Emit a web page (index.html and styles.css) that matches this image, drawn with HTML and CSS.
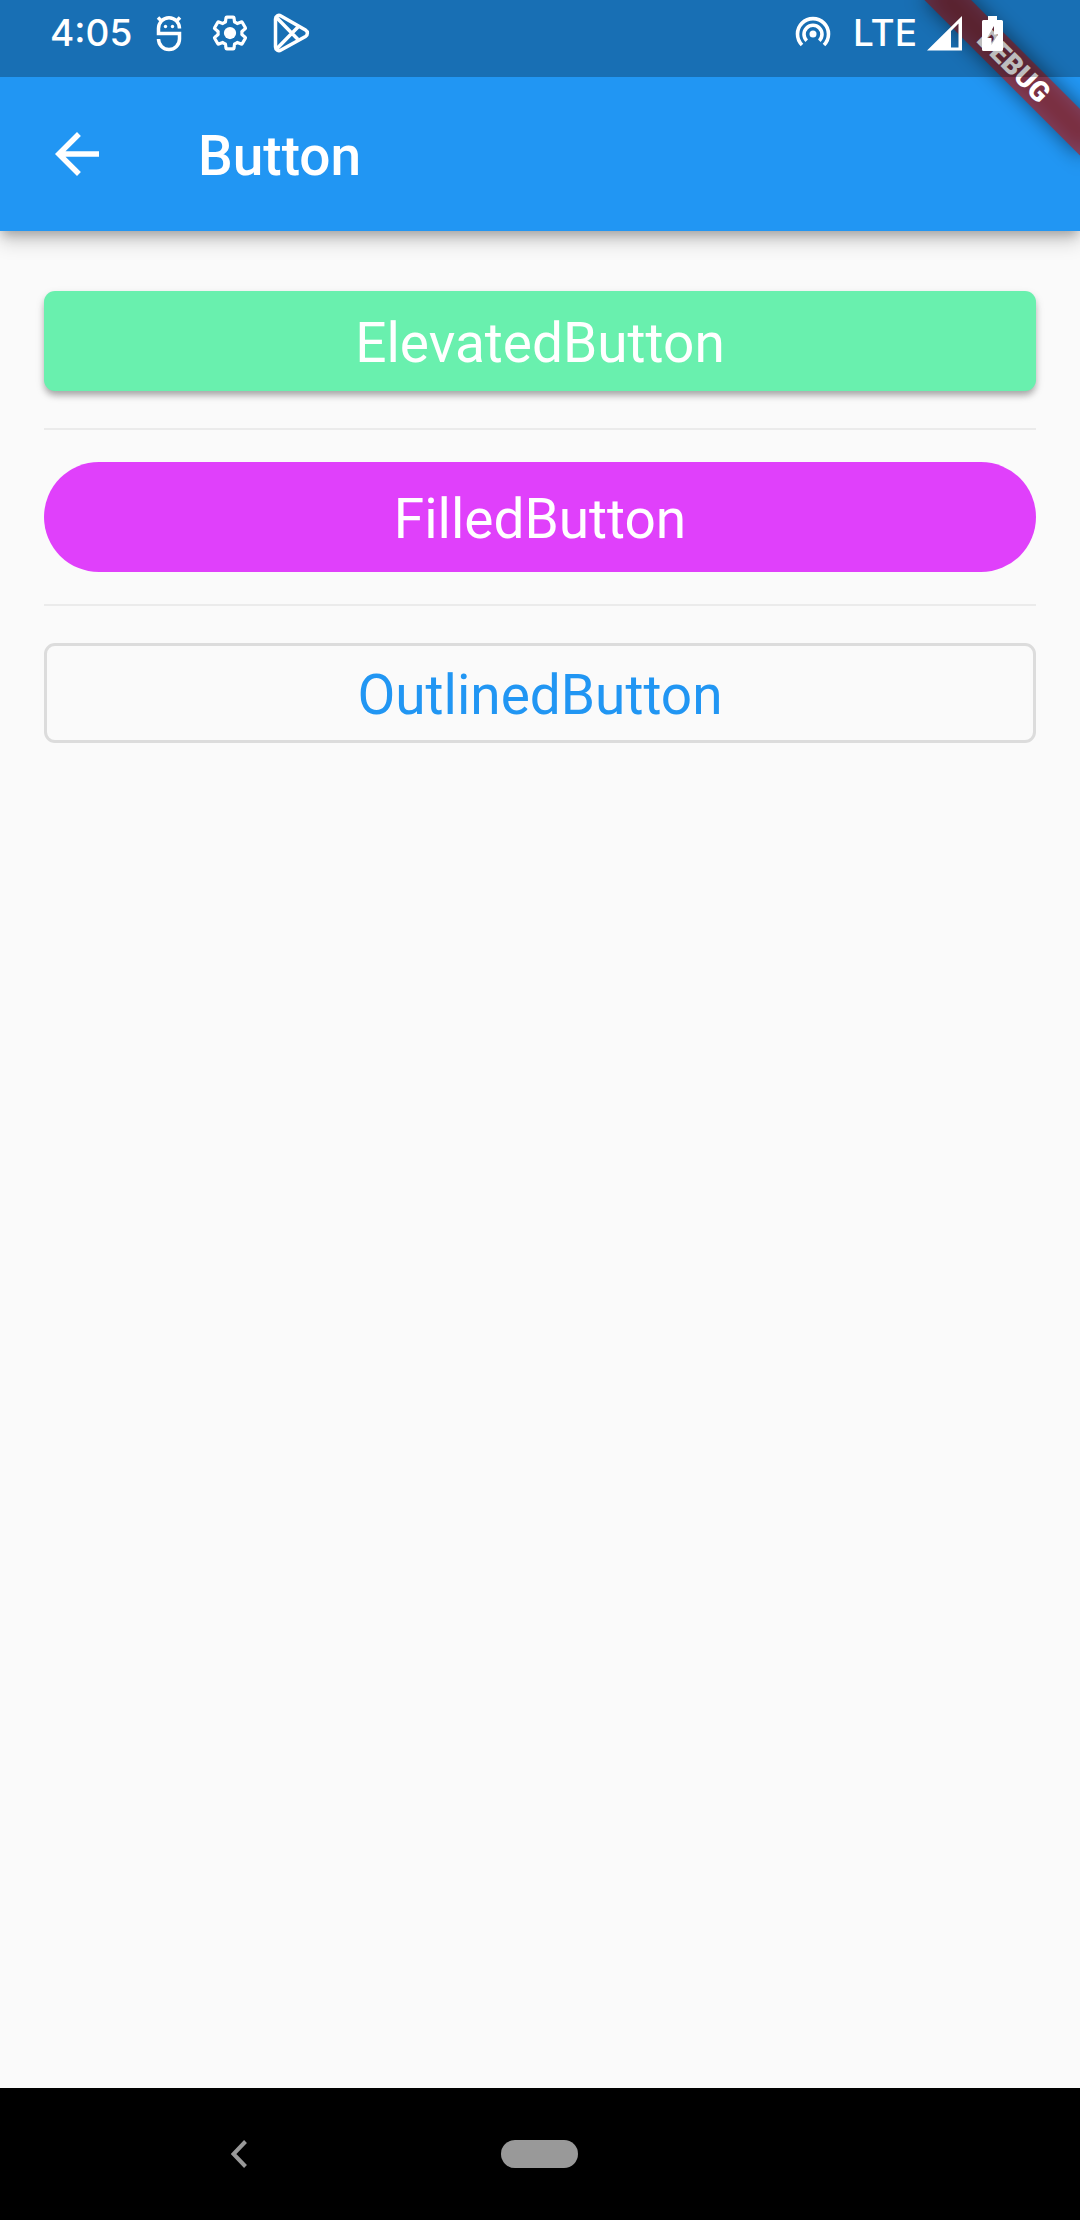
FILE: index.html
```
<!DOCTYPE html>
<html lang="en">
<head>
<meta charset="utf-8">
<meta name="viewport" content="width=device-width, initial-scale=1">
<title>Button</title>
<link rel="stylesheet" href="styles.css">
</head>
<body>
<div class="screen">
  <div class="status-bar">
    <div class="status-group">
      <span class="clock">4:05</span>
      <div class="notifications">
        <svg class="status-icon" viewBox="0 0 42 42" fill="none" stroke="#fff" stroke-width="3.500" aria-hidden="true">
          <path d="M31.500 16.500A10.500 10.800 0 0 0 10.500 16.500V21.500H31.500V27A10.500 10.500 0 0 1 10.500 27"/>
          <path d="M10 5.500l4 4M32 5.500l-4 4"/>
          <circle cx="17.500" cy="14.500" r="1.700" fill="#fff" stroke="none"/>
          <circle cx="24.500" cy="14.500" r="1.700" fill="#fff" stroke="none"/>
        </svg>
        <svg class="status-icon" viewBox="0 0 24 24" aria-hidden="true">
          <path transform="translate(1.080 1.080) scale(.910)" fill="none" stroke="#fff" stroke-width="2" stroke-linejoin="round" d="M19.430 12.980c.04-.32.07-.64.07-.98 0-.34-.03-.66-.07-.98l2.110-1.650c.19-.15.24-.42.12-.64l-2-3.460c-.09-.16-.26-.25-.44-.25-.06 0-.12.01-.17.03l-2.490 1c-.52-.4-1.080-.73-1.690-.98l-.38-2.650C14.460 2.180 14.250 2 14 2h-4c-.25 0-.46.18-.49.42l-.38 2.650c-.61.25-1.170.59-1.690.98l-2.490-1c-.06-.02-.12-.03-.18-.03-.17 0-.34.09-.43.25l-2 3.460c-.13.22-.07.49.12.64l2.110 1.650c-.04.32-.07.65-.07.98 0 .33.03.66.07.98l-2.110 1.650c-.19.15-.24.42-.12.64l2 3.460c.09.16.26.25.44.25.06 0 .12-.01.17-.03l2.490-1c.52.4 1.080.73 1.690.98l.38 2.650c.03.24.24.42.49.42h4c.25 0 .46-.18.49-.42l.38-2.650c.61-.25 1.170-.59 1.690-.98l2.490 1c.06.02.12.03.18.03.17 0 .34-.09.43-.25l2-3.460c.12-.22.07-.49-.12-.64z"/>
          <circle cx="12" cy="12" r="3.500" fill="#fff"/>
        </svg>
        <svg class="status-icon" viewBox="0 0 42 42" fill="none" stroke="#fff" stroke-width="3.500" stroke-linejoin="round" aria-hidden="true">
          <path d="M5.500 7v28c0 3 3 4.500 5.500 3L35.500 24.500c2.500-1.500 2.500-5 0-6.500L11 4C8.500 2.500 5.500 4 5.500 7z"/>
          <path d="M6.500 5.500L28 27.500M6.500 37L28 15"/>
        </svg>
      </div>
    </div>
    <div class="status-group">
      <svg class="hotspot-icon" viewBox="0 0 36 36" fill="none" stroke="#fff" stroke-width="3.600" aria-hidden="true">
        <path d="M7 30A15.500 15.500 0 1 1 29 30"/>
        <path d="M11.700 25.700A9 9 0 1 1 24.300 25.700"/>
        <circle cx="18" cy="19" r="3.500" fill="#fff" stroke="none"/>
      </svg>
      <span class="network">LTE</span>
      <svg class="signal-icon" viewBox="0 0 35 35" aria-hidden="true">
        <path fill="#fff" fill-rule="evenodd" d="M0 34.500L35 0v34.500zM24 15v16.500h7.500V7.500z"/>
      </svg>
      <svg class="battery-icon" viewBox="0 0 21 35" aria-hidden="true">
        <path fill="#fff" fill-rule="evenodd" d="M6 0h9v4h4.500Q21 4 21 5.500v28q0 1.500-1.500 1.500h-18Q0 35 0 33.500v-28Q0 4 1.500 4H6zM12 10L5 22h4.500v7L16 18.500h-4z"/>
      </svg>
    </div>
  </div>

  <header class="app-bar">
    <button class="back" type="button" aria-label="Back">
      <svg class="back-icon" viewBox="0 0 24 24" aria-hidden="true">
        <path fill="#fff" d="M20 11H7.830l5.590-5.590L12 4l-8 8 8 8 1.410-1.410L7.830 13H20v-2z"/>
      </svg>
    </button>
    <h1 class="title">Button</h1>
  </header>

  <main class="content">
    <button class="button button-elevated" type="button">ElevatedButton</button>
    <hr class="divider">
    <button class="button button-filled" type="button">FilledButton</button>
    <hr class="divider">
    <button class="button button-outlined" type="button">OutlinedButton</button>
  </main>

  <nav class="nav-bar" aria-label="System">
    <button class="nav-button" type="button" aria-label="Back">
      <svg class="chevron" viewBox="0 0 16 28" aria-hidden="true">
        <path d="M14.500 1.500L2.500 14l12 12.500" fill="none" stroke="#999" stroke-width="4"/>
      </svg>
    </button>
    <button class="nav-button" type="button" aria-label="Home"><span class="pill"></span></button>
  </nav>

  <div class="ribbon-clip"><div class="ribbon">DEBUG</div></div>
</div>
</body>
</html>
```
FILE: styles.css
```
* {
  box-sizing: border-box;
}

body {
  margin: 0;
  background: #fafafa;
  font-family: Roboto, "Liberation Sans", sans-serif;
}

button {
  margin: 0;
  padding: 0;
  border: 0;
  background: none;
  font: inherit;
  cursor: pointer;
}

svg {
  display: block;
}

.screen {
  position: relative;
  display: flex;
  flex-direction: column;
  min-height: 100vh;
}

/* Status bar: the scrim is translucent and sits over the ribbon */
.status-bar {
  position: relative;
  z-index: 3;
  display: flex;
  justify-content: space-between;
  height: 77px;
  padding: 0 77px 11px 50px;
  background: rgba(0, 0, 0, 0.26);
  color: #fff;
}

.status-group {
  display: flex;
  align-items: center;
}

.clock,
.network {
  font-family: Inter, Roboto, sans-serif;
  font-size: 37px;
  font-weight: 500;
  line-height: 44px;
}

.notifications {
  display: flex;
  gap: 19px;
  margin-left: 16px;
}

.status-icon {
  width: 42px;
  height: 42px;
}

.hotspot-icon {
  width: 36px;
  height: 36px;
  margin-right: 22px;
}

.signal-icon {
  width: 35px;
  height: 35px;
  margin: 0 20px 0 10px;
}

.battery-icon {
  width: 21px;
  height: 35px;
}

/* App bar: its colour runs up under the status bar */
.app-bar {
  position: relative;
  z-index: 1;
  display: flex;
  align-items: center;
  gap: 88px;
  height: 231px;
  margin-top: -77px;
  padding: 77px 44px 0;
  background: #2196f3;
  box-shadow: 0 5px 11px -2px rgba(0, 0, 0, 0.26), 0 11px 18px rgba(0, 0, 0, 0.16);
}

.back-icon {
  width: 66px;
  height: 66px;
}

.title {
  margin: 0;
  padding-top: 4px;
  color: #fff;
  font-size: 55px;
  font-weight: 500;
  line-height: 64px;
}

.content {
  flex: 1;
  display: flex;
  flex-direction: column;
  padding: 60px 44px;
}

.button {
  height: 100px;
  padding-top: 4px;
  border-radius: 11px;
  font-size: 55px;
  line-height: 64px;
  text-align: center;
}

.button-elevated {
  background: #69f0ae;
  color: #fff;
  box-shadow: 0 5px 6px -1px rgba(0, 0, 0, 0.24), 0 4px 10px rgba(0, 0, 0, 0.14);
}

.button-filled {
  height: 110px;
  border-radius: 55px;
  background: #e040fb;
  color: #fff;
}

.button-outlined {
  border: 3px solid #dcdcdc;
  color: #2196f3;
}

.divider {
  align-self: stretch;
  height: 2px;
  margin: 37px 0 32px;
  border: 0;
  background: #ebebeb;
}

.button-filled + .divider {
  margin: 32px 0 37px;
}

.nav-bar {
  display: grid;
  grid-template-columns: repeat(3, 1fr);
  height: 132px;
  padding: 0 88px;
  background: #000;
}

.nav-button {
  display: flex;
  align-items: center;
  justify-content: center;
}

.chevron {
  width: 16px;
  height: 28px;
}

.pill {
  width: 77px;
  height: 28px;
  border-radius: 14px;
  background: #999;
}

/* Corner ribbon */
.ribbon-clip {
  position: absolute;
  z-index: 2;
  top: 0;
  right: 0;
  width: 231px;
  height: 231px;
  overflow: hidden;
  pointer-events: none;
}

.ribbon {
  position: absolute;
  top: 77px;
  right: -110px;
  width: 220px;
  height: 33px;
  color: #fff;
  font-size: 28px;
  font-weight: 900;
  line-height: 34px;
  text-align: center;
  transform: rotate(45deg);
  transform-origin: 50% -77px;
}

/* The blurred shadow lies under the translucent band */
.ribbon::before,
.ribbon::after {
  content: "";
  position: absolute;
  z-index: -1;
  inset: 0;
}

.ribbon::before {
  background: rgba(0, 0, 0, 0.5);
  filter: blur(10px);
}

.ribbon::after {
  background: rgba(183, 28, 28, 0.63);
}
```
